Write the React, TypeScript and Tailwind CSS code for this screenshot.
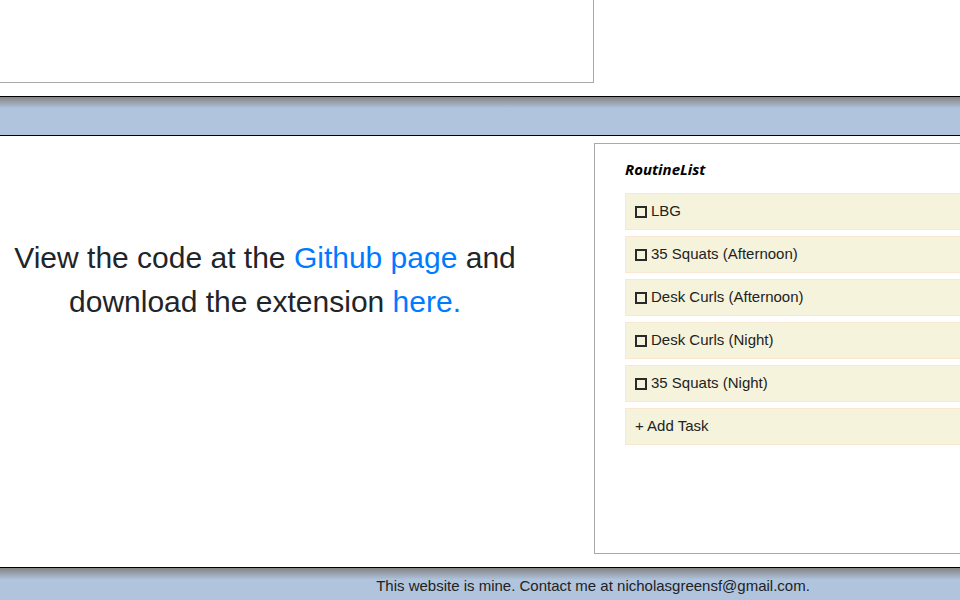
import React from "react";

const tasks = [
  "LBG",
  "35 Squats (Afternoon)",
  "Desk Curls (Afternoon)",
  "Desk Curls (Night)",
  "35 Squats (Night)",
];

const barClass =
  "border-black bg-linear-to-b from-[#848484] via-[#b0c4de] via-[30%] to-[#b0c4de]";

const App = () => {
  return (
    <div className="h-[600px] w-[960px] overflow-hidden bg-white font-['Liberation_Sans',Arial,sans-serif] text-[#212529]">
      <div className="w-[1186px]">
        {/* top leftover box */}
        <div className="h-[96px]">
          <div className="h-[83px] w-[594px] border-r border-b border-[#a9a9a9]" />
        </div>

        {/* header bar */}
        <div className={`h-[40px] border-y ${barClass}`} />

        {/* main */}
        <div className="flex h-[431px]">
          <div className="w-[594px] pt-[100px]">
            <p className="w-[530px] text-center text-[30px] leading-[44px]">
              View the code at the{" "}
              <a href="#" className="text-[#007bff]">
                Github page
              </a>{" "}
              and download the extension{" "}
              <a href="#" className="text-[#007bff]">
                here.
              </a>
            </p>
          </div>

          <div className="mt-[7px] h-[411px] flex-1 border border-[#a9a9a9] pl-[30px] pt-[16px]">
            <h2 className="text-[15px] font-bold italic leading-[18px] text-black font-['Open_Sans',sans-serif]">
              RoutineList
            </h2>
            <div className="mt-[15px] flex flex-col gap-[6px]">
              {tasks.map((t) => (
                <div
                  key={t}
                  className="flex h-[37px] items-center border border-[#fbe6cf] bg-[#f5f3dc] pl-[9px] text-[15px] text-[#222]"
                >
                  <span className="mr-[4px] inline-block h-[12px] w-[12px] border-2 border-[#2a2a2a]" />
                  {t}
                </div>
              ))}
              <div className="flex h-[37px] items-center border border-[#fbe6cf] bg-[#f5f3dc] pl-[9px] text-[15px] text-[#222]">
                + Add Task
              </div>
            </div>
          </div>
        </div>

        {/* footer */}
        <div className={`h-[40px] border-t pt-[7px] text-center text-[15px] text-[#222] ${barClass}`}>
          This website is mine. Contact me at nicholasgreensf@gmail.com.
        </div>
      </div>
    </div>
  );
};

export default App;
